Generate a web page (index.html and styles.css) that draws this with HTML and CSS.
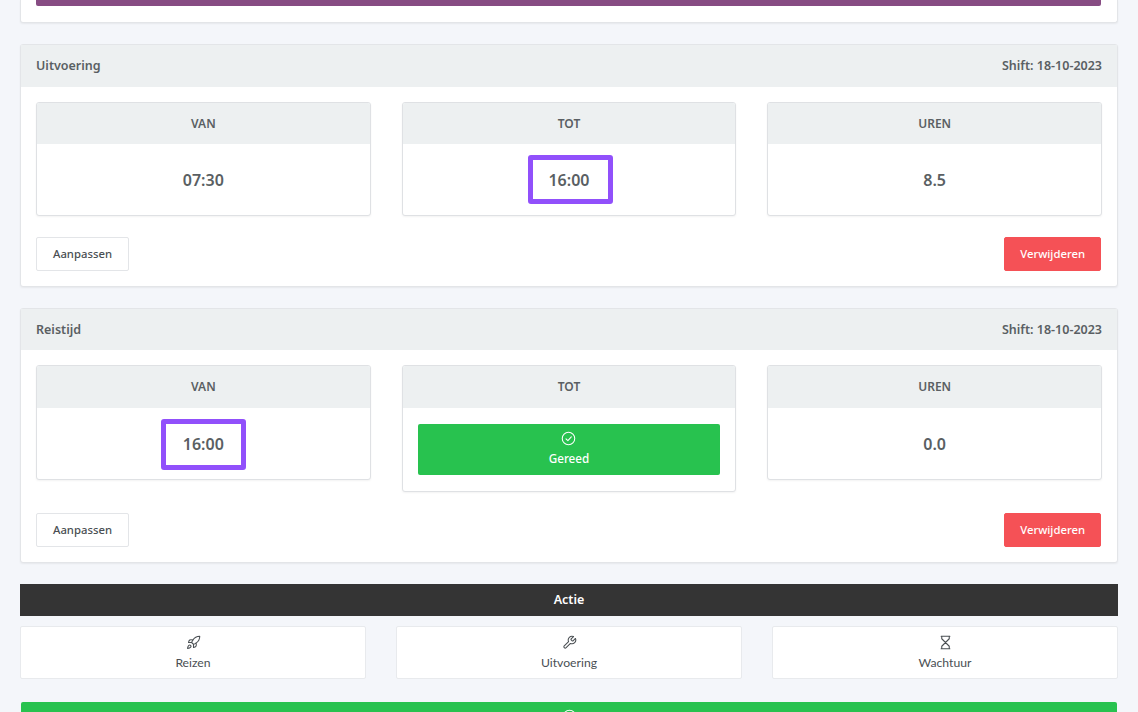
FILE: index.html
```html
<!DOCTYPE html>
<html lang="en">
<head>
  <meta charset="UTF-8">
  <title>Uren</title>
  <link rel="stylesheet" href="styles.css">
</head>
<body>

  <div class="card card-top">
    <div class="purple-bar"></div>
  </div>

  <div class="card">
    <div class="card-head">
      <span>Uitvoering</span>
      <span>Shift: 18-10-2023</span>
    </div>
    <div class="card-body">
      <div class="cols">
        <div class="time-card">
          <div class="time-head">VAN</div>
          <div class="time-val">07:30</div>
        </div>
        <div class="time-card">
          <div class="time-head">TOT</div>
          <div class="time-val"><span class="mark mark-a">16:00</span></div>
        </div>
        <div class="time-card">
          <div class="time-head">UREN</div>
          <div class="time-val">8.5</div>
        </div>
      </div>
      <div class="btn-row">
        <a class="btn">Aanpassen</a>
        <a class="btn btn-red">Verwijderen</a>
      </div>
    </div>
  </div>

  <div class="card">
    <div class="card-head">
      <span>Reistijd</span>
      <span>Shift: 18-10-2023</span>
    </div>
    <div class="card-body">
      <div class="cols">
        <div class="time-card">
          <div class="time-head">VAN</div>
          <div class="time-val"><span class="mark mark-b">16:00</span></div>
        </div>
        <div class="time-card">
          <div class="time-head">TOT</div>
          <div class="time-action">
            <a class="done">
              <svg class="icon" viewBox="0 0 24 24"><circle cx="12" cy="12" r="10"/><path d="M8 12.5l3 3 5.5-6"/></svg>
              <span>Gereed</span>
            </a>
          </div>
        </div>
        <div class="time-card">
          <div class="time-head">UREN</div>
          <div class="time-val">0.0</div>
        </div>
      </div>
      <div class="btn-row">
        <a class="btn">Aanpassen</a>
        <a class="btn btn-red">Verwijderen</a>
      </div>
    </div>
  </div>

  <div class="action-title">Actie</div>
  <div class="actions">
    <a class="action">
      <svg class="icon" viewBox="0 0 24 24"><path d="M4.5 16.5c-1.5 1.26-2 5-2 5s3.74-.5 5-2c.71-.84.7-2.13-.09-2.91a2.18 2.18 0 0 0-2.91-.09z"/><path d="M12 15l-3-3a22 22 0 0 1 2-3.95A12.88 12.88 0 0 1 22 2c0 2.72-.78 7.5-6 11a22.35 22.35 0 0 1-4 2z"/><path d="M9 12H4s.55-3.03 2-4c1.62-1.08 5 0 5 0"/><path d="M12 15v5s3.03-.55 4-2c1.08-1.62 0-5 0-5"/></svg>
      <span>Reizen</span>
    </a>
    <a class="action">
      <svg class="icon" viewBox="0 0 24 24"><path d="M14.7 6.3a1 1 0 0 0 0 1.4l1.6 1.6a1 1 0 0 0 1.4 0l3.77-3.77a6 6 0 0 1-7.94 7.94l-6.91 6.91a2.12 2.12 0 0 1-3-3l6.91-6.91a6 6 0 0 1 7.94-7.94l-3.76 3.76z"/></svg>
      <span>Uitvoering</span>
    </a>
    <a class="action">
      <svg class="icon" viewBox="0 0 24 24"><path d="M5 2h14M5 22h14M6 2v4l12 12v4M18 2v4L6 18v4"/></svg>
      <span>Wachtuur</span>
    </a>
  </div>

  <a class="finish">
    <svg class="icon" viewBox="0 0 24 24"><circle cx="12" cy="12" r="10"/><path d="M8 12.5l3 3 5.5-6"/></svg>
  </a>

</body>
</html>
```

FILE: styles.css
```css
html, body {
  height: 712px;
  overflow: hidden;
}

body {
  margin: 0;
  padding: 0 20px;
  background-color: #f4f6fa;
  color: #5a5f63;
  font-family: 'Noto Sans', sans-serif;
  font-size: 12px;
}

.card {
  background-color: #fff;
  border: 1px solid #e3e5e8;
  border-radius: 3px;
  box-shadow: 0 1px 2px rgba(0,0,0,0.06);
  margin-bottom: 20.8px;
}

.card-top {
  height: 23px;
  box-sizing: border-box;
  margin-bottom: 21.4px;
  border-top: none;
  border-radius: 0 0 3px 3px;
  padding: 0 16px 0 15px;
}

.purple-bar {
  height: 6px;
  background-color: #874c83;
  border-radius: 0 0 2px 2px;
}

.card-head {
  display: flex;
  justify-content: space-between;
  align-items: center;
  box-sizing: border-box;
  height: 41.6px;
  padding: 0 15px 0.4px;
  background-color: #edf0f1;
  font-size: 12.5px;
  font-weight: 600;
}

.card-body {
  padding: 15px;
}

.cols {
  display: grid;
  grid-template-columns: repeat(3, 1fr);
  gap: 31px;
  align-items: start;
}

.time-card {
  background-color: #fff;
  border: 1px solid #dfe1e4;
  border-radius: 3px;
  box-shadow: 0 1px 2px rgba(0,0,0,0.05);
  overflow: hidden;
}

.time-head {
  height: 41.4px;
  line-height: 41px;
  text-align: center;
  background-color: #edf0f1;
  font-size: 12px;
  font-weight: 600;
}

.time-val {
  height: 71px;
  line-height: 72px;
  text-align: center;
  font-size: 16px;
  font-weight: 600;
}

.mark {
  position: relative;
}

.mark::after {
  content: "";
  position: absolute;
  border: 5px solid #9150fb;
  border-radius: 3px;
}

.mark-a::after {
  left: -20px;
  right: -23px;
  top: -14px;
  bottom: -13px;
}

.mark-b::after {
  left: -22px;
  right: -22px;
  top: -14px;
  bottom: -15px;
}

.time-action {
  padding: 16px 15px;
}

.done {
  display: flex;
  flex-direction: column;
  align-items: center;
  justify-content: center;
  gap: 4px;
  box-sizing: border-box;
  height: 51.6px;
  padding-bottom: 1px;
  background-color: #28c24f;
  border-radius: 2px;
  color: #fff;
  font-size: 11.7px;
  font-weight: 500;
}

.btn-row {
  display: flex;
  justify-content: space-between;
  margin: 20.8px 1px 0 0;
}

.btn {
  display: block;
  box-sizing: border-box;
  height: 33.6px;
  line-height: 31px;
  padding: 0 16px;
  background-color: #fff;
  border: 1px solid #e3e5e8;
  border-radius: 2px;
  font-size: 11.3px;
  font-weight: 500;
  color: #4a4f53;
}

.btn-red {
  padding: 0 15px;
  background-color: #f55156;
  border-color: #f55156;
  color: #fff;
}

.action-title {
  height: 32px;
  line-height: 32px;
  margin-top: 21.6px;
  text-align: center;
  background-color: #343434;
  color: #fff;
  font-size: 12.5px;
  font-weight: 600;
}

.actions {
  display: grid;
  grid-template-columns: repeat(3, 1fr);
  gap: 30px;
  margin-top: 10px;
}

.action {
  display: flex;
  flex-direction: column;
  align-items: center;
  justify-content: center;
  gap: 5px;
  height: 53px;
  box-sizing: border-box;
  background-color: #fff;
  border: 1px solid #e8eaed;
  border-radius: 2px;
  color: #4a4f53;
  font-family: 'Lato', sans-serif;
  font-size: 12.2px;
}

.icon {
  flex: none;
  width: 15px;
  height: 15px;
  fill: none;
  stroke: currentColor;
  stroke-width: 1.7;
  stroke-linecap: round;
  stroke-linejoin: round;
}

.finish {
  display: flex;
  justify-content: center;
  box-sizing: border-box;
  height: 10px;
  margin: 22.6px 1px 0;
  padding-top: 7px;
  overflow: hidden;
  background-color: #28c24f;
  border-radius: 2px 2px 0 0;
  color: #fff;
}
```
